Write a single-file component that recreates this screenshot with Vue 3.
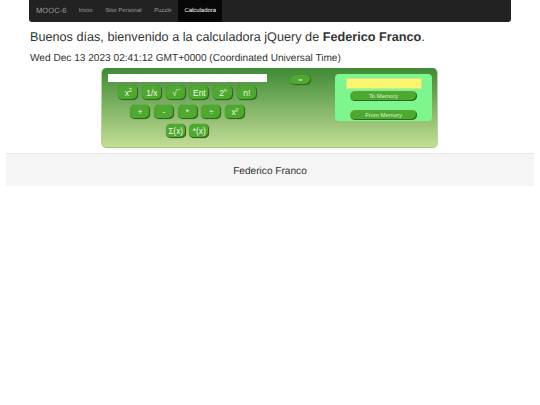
<script setup>
const navItems = [
  { label: 'Inicio' },
  { label: 'Sitio Personal' },
  { label: 'Puzzle' },
  { label: 'Calculadora', active: true }
]
const rows = [
  ['x<sup>2</sup>', '1/x', '√<span class="over">‾‾</span>', 'Ent', '2<sup>n</sup>', 'n!'],
  ['+', '-', '*', '÷', 'x<sup>y</sup>'],
  ['Σ(x)', '*(x)']
]
</script>

<template>
  <div class="page">
    <nav class="navbar">
      <span class="brand">MOOC-6</span>
      <a v-for="item in navItems" :key="item.label" class="nav-link" :class="{ active: item.active }">{{ item.label }}</a>
    </nav>
    <main class="content">
      <h1 class="greeting">Buenos días, bienvenido a la calculadora jQuery de <b>Federico Franco</b>.</h1>
      <p class="date">Wed Dec 13 2023 02:41:12 GMT+0000 (Coordinated Universal Time)</p>
      <section class="calc">
        <div class="keys">
          <div class="display"></div>
          <div v-for="(row, i) in rows" :key="i" class="key-row">
            <button v-for="k in row" :key="k" class="key" v-html="k"></button>
          </div>
        </div>
        <button class="key equals">=</button>
        <div class="memory">
          <div class="mem-display"></div>
          <button class="mem-btn">To Memory</button>
          <button class="mem-btn from">From Memory</button>
        </div>
      </section>
    </main>
    <footer class="footer">Federico Franco</footer>
  </div>
</template>

<style scoped>
.page {
  font-family: "Liberation Sans", Arial, sans-serif;
  color: #333;
  text-rendering: geometricPrecision;
}
.navbar {
  display: flex;
  align-items: stretch;
  height: 22px;
  margin: 0 29px;
  padding-left: 7px;
  background: #222;
  border-radius: 0 0 3px 3px;
}
.brand {
  font-size: 7.6px;
  line-height: 22px;
  color: #9d9d9d;
  margin-right: 6px;
}
.nav-link {
  font-size: 5.9px;
  line-height: 22px;
  padding: 0 6.33px;
  color: #9d9d9d;
}
.nav-link.active {
  color: #fff;
  background: #080808;
}
.content {
  margin: 0 30px;
}
.greeting {
  margin: 7px 0 0;
  font-size: 12.66px;
  line-height: 17px;
  font-weight: 400;
  color: #333;
}
.greeting b {
  font-weight: 700;
}
.date {
  margin: 6px 0 0;
  font-size: 10.12px;
  line-height: 13px;
}
.calc {
  display: flex;
  align-items: flex-start;
  box-sizing: border-box;
  width: 337px;
  height: 80px;
  margin: 3px 0 0 71px;
  padding: 6px 6px 0 6px;
  border-radius: 5px;
  border-bottom: 1px solid #9fc77f;
  border-right: 1px solid #b9d49c;
  border-left: 1px solid #b9d49c;
  background: linear-gradient(#3e8a35, #c3dd96);
}
.keys {
  width: 159px;
  flex: none;
}
.display {
  height: 8px;
  background: #fff;
}
.key-row {
  display: flex;
  justify-content: center;
  gap: 3.7px;
  margin-top: 5px;
}
.key-row:nth-child(2) {
  margin-top: 4px;
}
.key {
  width: 20px;
  height: 14px;
  padding: 0;
  border: 0;
  border-radius: 5px;
  background: #4fa82f;
  box-shadow: inset -1px -1px 0 #2a6a1e, 0 0 1px #2c6b22;
  color: #eef8e2;
  font: 8.44px/13px "Liberation Sans", Arial, sans-serif;
}
.key :deep(sup) {
  font-size: 5.5px;
  line-height: 0;
}
.key :deep(.over) {
  font-size: 6px;
  vertical-align: 2px;
  letter-spacing: -1px;
}
.equals {
  flex: none;
  width: 21px;
  height: 10px;
  font-size: 6px;
  font-weight: 700;
  line-height: 9px;
  color: #fff;
  margin: 1px 0 0 23px;
}
.memory {
  flex: none;
  box-sizing: border-box;
  width: 97px;
  height: 47px;
  margin-left: 24px;
  padding-top: 4px;
  display: flex;
  flex-direction: column;
  align-items: center;
  border-radius: 4px;
  background: #7ff58f;
}
.mem-display {
  flex: none;
  width: 76px;
  height: 11px;
  box-sizing: border-box;
  background: #fbf66f;
  border: 1px solid #cfe58a;
}
.mem-btn {
  flex: none;
  width: 67px;
  height: 10px;
  padding: 0;
  margin-top: 2px;
  border: 0;
  border-radius: 5px;
  background: #4fa82f;
  box-shadow: inset -1px -1px 0 #2a6a1e;
  color: #dff2cf;
  font: 5.9px/9px "Liberation Sans", Arial, sans-serif;
}
.mem-btn.from {
  margin-top: 9px;
}
.footer {
  box-sizing: border-box;
  height: 33px;
  margin: 5px 6px 0;
  background: #f5f5f5;
  border-top: 1px solid #e7e7e7;
  font-size: 10.12px;
  line-height: 35px;
  text-align: center;
  color: #333;
}
</style>
